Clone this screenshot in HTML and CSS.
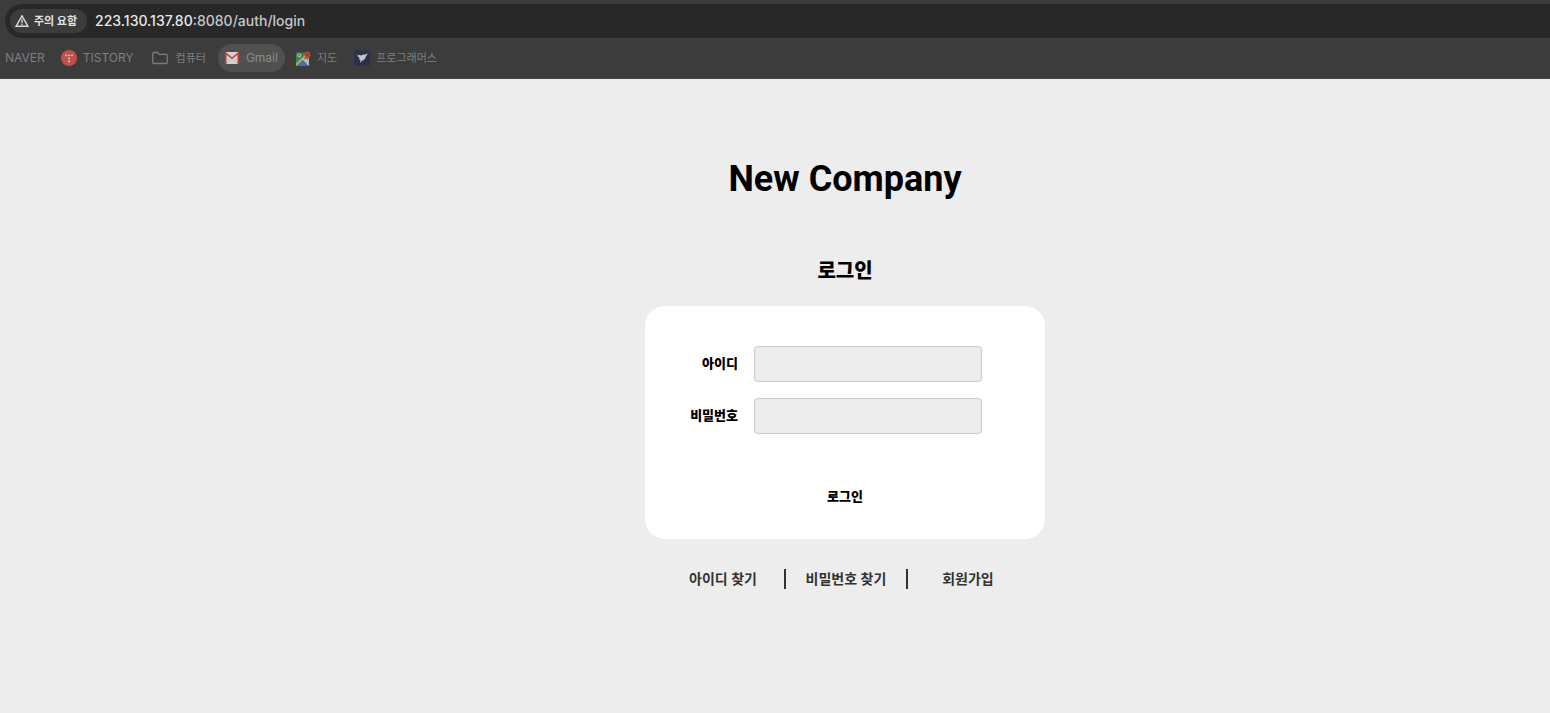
FILE: index.html
```html
<!DOCTYPE html>
<html lang="ko">
<head>
<meta charset="utf-8">
<title>New Company</title>
<link rel="stylesheet" href="styles.css">
</head>
<body>
<header class="browser">
  <div class="address">
    <button class="chip" type="button">
      <svg width="14" height="14" viewBox="0 0 14 14" fill="none" stroke="#dcdcdc" stroke-width="1.4"><path d="M7 1.8 13 12.3H1Z"/><path d="M7 5.3v3.4M7 9.6v1.4"/></svg>
      <span>주의 요함</span>
    </button>
    <span class="url"><span class="host">223.130.137.80</span>:8080/auth/login</span>
  </div>
  <nav class="bookmarks">
    <a class="bookmark" href="#">NAVER</a>
    <a class="bookmark tistory" href="#">
      <svg width="16" height="16" viewBox="0 0 16 16"><circle cx="8" cy="8" r="8" fill="#c15046"/><g fill="#ecd3d0"><circle cx="5" cy="5.3" r=".9"/><circle cx="8" cy="5.3" r=".9"/><circle cx="11" cy="5.3" r=".9"/><circle cx="8" cy="8.3" r=".9"/><circle cx="8" cy="11.2" r=".9"/></g></svg>
      <span>TISTORY</span>
    </a>
    <a class="bookmark folder" href="#">
      <svg width="16" height="14" viewBox="0 0 16 14" fill="none" stroke="#7c7c7c" stroke-width="1.3"><path d="M.8 11.5v-9c0-.6.4-1 1-1h3.8l1.6 1.900h7c.6 0 1 .4 1 1v7.100c0 .6-.4 1-1 1H1.800c-.6 0-1-.4-1-1Z"/></svg>
      <span class="ko">컴퓨터</span>
    </a>
    <a class="bookmark active" href="#">
      <svg width="14" height="12" viewBox="0 0 14 12"><rect width="14" height="12" rx="1" fill="#d2d2d2"/><path d="m2 11.500 4-4.500M12 11.500 8 7" fill="none" stroke="#b8b8b8" stroke-width=".7"/><path d="M.8 12V1.200L7 6.300l6.200-5.100V12" fill="none" stroke="#bd453b" stroke-width="1.600"/></svg>
      <span>Gmail</span>
    </a>
    <a class="bookmark map" href="#">
      <svg width="15" height="15" viewBox="0 0 15 15"><path d="M0 2.500q0-1 1-1h12V15H1q-1 0-1-1Z" fill="#378553"/><path d="M1 15 7 8l6 6.500V15Z" fill="#456db0"/><path d="m0 14 12.500-12" stroke="#c6a84a" stroke-width="2"/><path d="m7 8 6 6" stroke="#c8c8c8" stroke-width="1.300"/><path d="m8 9 5-4v8Z" fill="#b8b9b8"/><circle cx="3.300" cy="4.500" r="1.500" fill="none" stroke="#c7d4ca"/><path d="M11.300 10c0-3-3-3.800-3-6.400a3.100 3.100 0 0 1 6.200 0c0 2.600-3.200 3.400-3.200 6.400Z" fill="#b9463e"/><circle cx="11.400" cy="3.600" r="1.100" fill="#762f2b"/></svg>
      <span class="ko">지도</span>
    </a>
    <a class="bookmark programmers" href="#">
      <svg width="16" height="16" viewBox="0 0 16 16"><rect width="16" height="16" rx="2" fill="#293246"/><path d="m2.500 4.500 5 1 1.500-1 1.500.2L14 3.500l-2.300 3.300c-.3 2.200-1.700 3.500-3.500 3.800L6 13l.5-2.800-1.300-.8 1-.4-1.700-.8 1.100-.5-2.300-1.500 1.400-.2Z" fill="#c5c8cb"/></svg>
      <span class="ko">프로그래머스</span>
    </a>
  </nav>
</header>
<main class="page">
  <h1 class="brand">New Company</h1>
  <h2 class="heading">로그인</h2>
  <form class="card">
    <div class="fields">
      <label for="user">아이디</label>
      <input id="user" type="text">
      <label for="password">비밀번호</label>
      <input id="password" type="password">
    </div>
    <button class="submit" type="button">로그인</button>
  </form>
  <nav class="links">
    <a href="#">아이디 찾기</a>
    <a href="#">비밀번호 찾기</a>
    <a href="#">회원가입</a>
  </nav>
</main>
</body>
</html>
```
FILE: styles.css
```css
* { box-sizing: border-box; }

body {
  margin: 0;
  min-height: 100vh;
  background: #ededed;
  color: #000;
  font-family: Roboto, "Noto Sans CJK KR", sans-serif;
}

a { color: inherit; text-decoration: none; }
button { border: 0; background: none; color: inherit; font: inherit; padding: 0; }
svg { display: block; flex: none; }

.browser {
  padding: 4px 0 6px;
  background: #3c3c3c;
  border-bottom: 1px solid #464646;
  font-family: Inter, "Noto Sans CJK KR", sans-serif;
}

.address {
  display: flex;
  align-items: center;
  gap: 8px;
  height: 34px;
  margin-left: 5px;
  padding-left: 5px;
  border-radius: 17px 0 0 17px;
  background: #282828;
}

.chip {
  display: flex;
  align-items: center;
  gap: 5px;
  height: 24px;
  padding: 0 10px 0 5px;
  border-radius: 12px;
  background: #3c3c3c;
  color: #e3e3e3;
  font-size: 11px;
  font-weight: 700;
  line-height: 24px;
}

.url { color: #c7c7c7; font-size: 14px; font-weight: 500; line-height: 20px; }
.host { color: #e8e8e8; }

.bookmarks {
  display: flex;
  align-items: center;
  padding: 6px 0 0 5px;
  color: #7f7f7f;
  font-size: 12px;
  line-height: 28px;
}

.ko { font-size: 11px; }
.bookmark { display: flex; align-items: center; gap: 6px; height: 28px; }
.tistory { margin-left: 16px; }
.folder { gap: 8px; margin-left: 18px; }
.active {
  gap: 7px;
  margin-left: 12px;
  padding: 0 7px;
  border-radius: 14px;
  background: #505050;
  color: #8d8d8d;
}
.map { margin-left: 11px; }
.programmers { margin-left: 17px; }

.page {
  display: flex;
  flex-direction: column;
  align-items: center;
  padding: 76px 0 40px 140px;
}

.brand { margin: 0; font-size: 36px; font-weight: 700; line-height: 48px; }
.heading { margin: 53px 0 20px; font-size: 20px; font-weight: 900; line-height: 30px; }

.card {
  display: flex;
  flex-direction: column;
  align-items: center;
  width: 100%;
  max-width: 400px;
  padding: 40px 40px 30px;
  border-radius: 20px;
  background: #fff;
}

.fields {
  display: grid;
  grid-template-columns: 53px 228px;
  gap: 16px;
  align-self: flex-start;
  align-items: center;
  font-size: 13px;
  font-weight: 900;
  line-height: 20px;
  text-align: right;
  white-space: nowrap;
}

.fields input {
  width: 100%;
  height: 36px;
  padding: 0 8px;
  border: 1px solid #ccc;
  border-radius: 4px;
  background: #ededed;
  font: inherit;
}

.submit {
  margin-top: 50px;
  padding: 0 20px;
  font-size: 13px;
  font-weight: 900;
  line-height: 25px;
}

.links {
  display: flex;
  margin-top: 30px;
  color: #333;
  font-size: 14px;
  font-weight: 700;
  line-height: 20px;
  text-align: center;
}

.links a { width: 122px; }
.links a + a { border-left: 2px solid #333; }
```
